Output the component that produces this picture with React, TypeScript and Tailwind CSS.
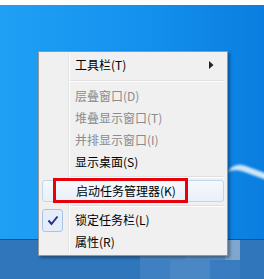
import React from "react";

const font = { fontFamily: '"Microsoft YaHei", "Noto Sans CJK SC", "Noto Sans", sans-serif' };

const Sep = ({ h }: { h: string }) => (
  <div className={`flex items-center pl-[29px] pr-[1px] ${h}`}>
    <div className="w-full border-t border-[#e0e0e0] border-b border-b-white" />
  </div>
);

const Item = ({ label, disabled, children }: { label: string; disabled?: boolean; children?: React.ReactNode }) => (
  <div className="flex items-center h-[22px] pl-[34px] pr-[10px]">
    <span className={`text-[12px] leading-none ${disabled ? "text-[#8b8b8b]" : "text-black"}`}>{label}</span>
    <div className="flex-1" />
    {children}
  </div>
);

const App = () => {
  return (
    <div className="w-[264px] h-[279px] overflow-hidden flex flex-col bg-white" style={font}>
      <div className="h-[5px] bg-white" />
      <div className="relative flex-1 bg-gradient-to-r from-[#1fa0f4] via-[#1592ef] to-[#0a7ee0]">
        <div className="absolute right-[-20px] top-[165px] w-[60px] h-[30px] rounded-full border-t-[6px] border-white/80 rotate-[20deg] blur-[1px]" />

        {/* context menu */}
        <div className="absolute left-[38px] top-[46px] w-[190px] h-[205px] bg-[#f0f0f0] border border-[#979797] p-[2px] shadow-[2px_2px_3px_rgba(0,0,0,0.35)]">
          <div className="absolute left-[29px] top-[2px] bottom-[2px] w-[2px] border-l border-[#e2e3e3] border-r border-r-white" />
          <div className="relative flex flex-col">
            <Item label="工具栏(T)">
              <svg width="5" height="8" viewBox="0 0 5 8" className="mr-[1px]">
                <path d="M0 0 L4.5 4 L0 8 Z" fill="#222" />
              </svg>
            </Item>
            <Sep h="h-[9px]" />
            <Item label="层叠窗口(D)" disabled />
            <Item label="堆叠显示窗口(T)" disabled />
            <Item label="并排显示窗口(I)" disabled />
            <Item label="显示桌面(S)" />
            <Sep h="h-[7px]" />
            <div className="h-[22px] mx-[1px] rounded-[3px] border border-[#c2d5ec] bg-gradient-to-b from-[#f6f9fd] to-[#e9f0f9] flex items-center pl-[33px]">
              <span className="text-[12px] leading-none text-black">启动任务管理器(K)</span>
            </div>
            <Sep h="h-[7px]" />
            <div className="relative">
              <div className="absolute left-[1px] top-0 w-[21px] h-[23px] rounded-[3px] border border-[#a9c3e6] bg-[#e4edf9] flex items-center justify-center">
                <svg width="12" height="11" viewBox="0 0 12 11">
                  <path d="M1.5 5.5 L4.5 9 L10.5 1.5" fill="none" stroke="#27308f" strokeWidth="2" />
                </svg>
              </div>
              <Item label="锁定任务栏(L)" />
            </div>
            <Item label="属性(R)" />
          </div>
        </div>

        {/* annotation */}
        <div className="absolute left-[53px] top-[173px] w-[135px] h-[25px] border-[3px] border-[#e8000b]" />
      </div>
      <div className="h-[40px] border-t border-[#1c4f86] bg-[#3076bb] flex">
        <div className="w-[140px]" />
        <div className="flex flex-col">
          <div className="flex h-[20px]">
            <div className="w-[45px] bg-[#4f8bc6]" />
            <div className="w-[40px] bg-[#5b92c9]" />
            <div className="w-[15px] bg-[#7ea6cf]" />
          </div>
          <div className="flex h-[19px]">
            <div className="w-[30px] bg-[#3f80c2]" />
            <div className="w-[40px] bg-[#4a88c5]" />
            <div className="w-[30px] bg-[#3a7cc0]" />
          </div>
        </div>
      </div>
    </div>
  );
};

export default App;
